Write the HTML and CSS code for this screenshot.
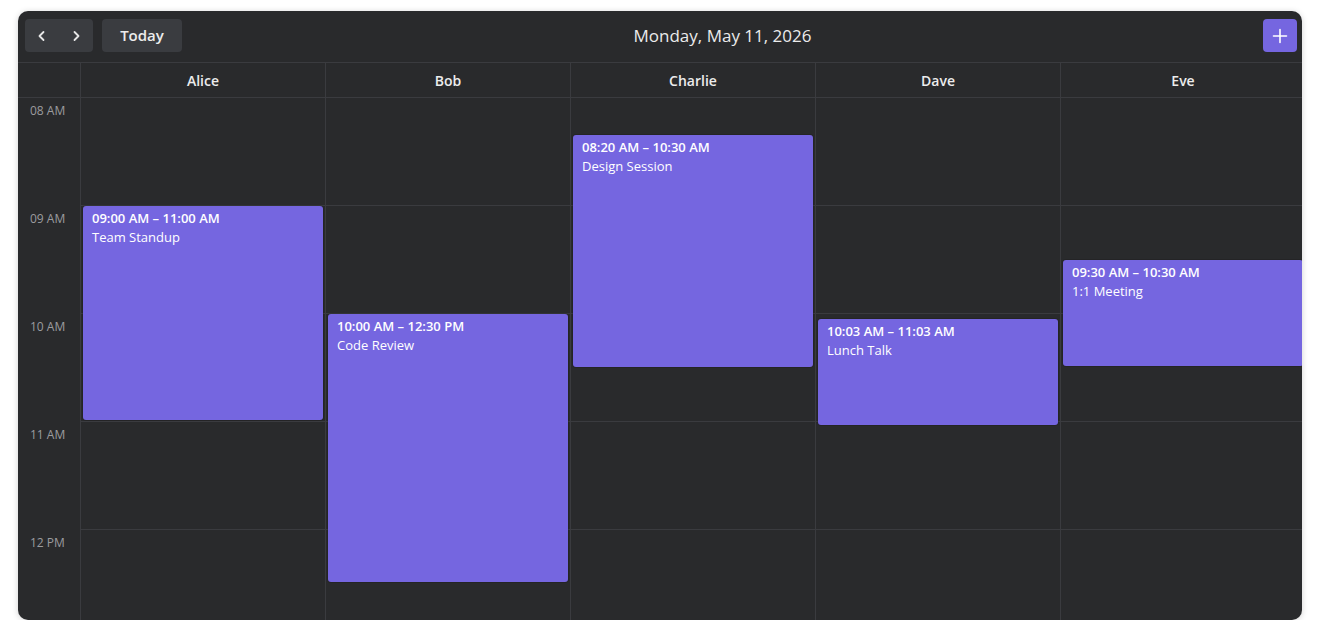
FILE: index.html
```html
<!DOCTYPE html>
<html lang="en">
<head>
    <meta charset="UTF-8">
    <meta name="viewport" content="width=device-width, initial-scale=1.0">
    <title>Calendar - Day View</title>
    <link rel="stylesheet" href="styles.css">
</head>
<body>
    <div class="calendar">
        <!-- Toolbar -->
        <div class="toolbar">
            <div class="nav-group">
                <button class="nav-btn" aria-label="Previous">
                    <svg width="14" height="14" viewBox="0 0 14 14"><path d="M8.5 3 L4.5 7 L8.5 11" fill="none" stroke="#e6e6e6" stroke-width="1.8" stroke-linecap="round" stroke-linejoin="round"/></svg>
                </button>
                <button class="nav-btn" aria-label="Next">
                    <svg width="14" height="14" viewBox="0 0 14 14"><path d="M5.5 3 L9.5 7 L5.5 11" fill="none" stroke="#e6e6e6" stroke-width="1.8" stroke-linecap="round" stroke-linejoin="round"/></svg>
                </button>
            </div>
            <button class="today-btn">Today</button>
            <div class="title">Monday, May 11, 2026</div>
            <button class="add-btn" aria-label="Add event">
                <svg width="18" height="18" viewBox="0 0 18 18"><path d="M9 2.5 V15.5 M2.5 9 H15.5" fill="none" stroke="#ffffff" stroke-width="1.6" stroke-linecap="round"/></svg>
            </button>
        </div>

        <!-- Grid -->
        <div class="grid-wrap">
            <div class="grid">
                <div class="head-cell gutter-head"></div>
                <div class="head-cell">Alice</div>
                <div class="head-cell">Bob</div>
                <div class="head-cell">Charlie</div>
                <div class="head-cell">Dave</div>
                <div class="head-cell">Eve</div>

                <div class="gutter">
                    <div class="time-label">08 AM</div>
                    <div class="time-label">09 AM</div>
                    <div class="time-label">10 AM</div>
                    <div class="time-label">11 AM</div>
                    <div class="time-label">12 PM</div>
                </div>

                <div class="day-col">
                    <div class="slot"></div><div class="slot"></div><div class="slot"></div><div class="slot"></div><div class="slot"></div>
                    <div class="event" style="top: 108px; height: 214px;">
                        <div class="event-time">09:00 AM – 11:00 AM</div>
                        <div class="event-title">Team Standup</div>
                    </div>
                </div>

                <div class="day-col">
                    <div class="slot"></div><div class="slot"></div><div class="slot"></div><div class="slot"></div><div class="slot"></div>
                    <div class="event" style="top: 216px; height: 268px;">
                        <div class="event-time">10:00 AM – 12:30 PM</div>
                        <div class="event-title">Code Review</div>
                    </div>
                </div>

                <div class="day-col">
                    <div class="slot"></div><div class="slot"></div><div class="slot"></div><div class="slot"></div><div class="slot"></div>
                    <div class="event" style="top: 37px; height: 232px;">
                        <div class="event-time">08:20 AM – 10:30 AM</div>
                        <div class="event-title">Design Session</div>
                    </div>
                </div>

                <div class="day-col">
                    <div class="slot"></div><div class="slot"></div><div class="slot"></div><div class="slot"></div><div class="slot"></div>
                    <div class="event" style="top: 221px; height: 106px;">
                        <div class="event-time">10:03 AM – 11:03 AM</div>
                        <div class="event-title">Lunch Talk</div>
                    </div>
                </div>

                <div class="day-col">
                    <div class="slot"></div><div class="slot"></div><div class="slot"></div><div class="slot"></div><div class="slot"></div>
                    <div class="event" style="top: 162px; height: 106px;">
                        <div class="event-time">09:30 AM – 10:30 AM</div>
                        <div class="event-title">1:1 Meeting</div>
                    </div>
                </div>
            </div>
        </div>
    </div>
</body>
</html>
```

FILE: styles.css
```css
* {
    box-sizing: border-box;
}
body {
    margin: 0;
    padding: 11px 18px 0 18px;
    background: #ffffff;
    font-family: "Open Sans", "Noto Sans", sans-serif;
    color: #e8e8e8;
}
.calendar {
    width: 1284px;
    height: 609px;
    background: #292a2c;
    border-radius: 10px;
    box-shadow: 0 1px 6px rgba(0, 0, 0, 0.18);
    overflow: hidden;
    display: flex;
    flex-direction: column;
}

/* toolbar */
.toolbar {
    height: 52px;
    flex-shrink: 0;
    display: flex;
    align-items: center;
    padding: 0 5px 2px 7px;
    border-bottom: 1px solid #3a3b3f;
}
button {
    font-family: inherit;
    border: none;
    cursor: pointer;
    color: #ececec;
}
.nav-group {
    display: flex;
    height: 33px;
    width: 68px;
    background: #3a3c40;
    border-radius: 4px;
}
.nav-btn {
    flex: 1;
    background: transparent;
    display: flex;
    align-items: center;
    justify-content: center;
    padding: 0;
}
.today-btn {
    margin-left: 9px;
    width: 80px;
    height: 33px;
    background: #3a3c40;
    border-radius: 4px;
    font-size: 15px;
    font-weight: 600;
    padding: 0 0 2px 0;
}
.title {
    flex: 1;
    text-align: center;
    font-size: 17px;
    color: #ebebeb;
}
.add-btn {
    width: 34px;
    height: 33px;
    background: #7566e0;
    border-radius: 4px;
    display: flex;
    align-items: center;
    justify-content: center;
    padding: 0;
}

/* grid */
.grid-wrap {
    flex: 1;
    overflow: hidden;
}
.grid {
    display: grid;
    grid-template-columns: 62px repeat(5, 245px);
    width: 1287px;
}
.head-cell {
    height: 35px;
    display: flex;
    align-items: center;
    justify-content: center;
    font-size: 14px;
    font-weight: 600;
    color: #ececec;
    border-left: 1px solid #3a3b3f;
    border-bottom: 1px solid #3a3b3f;
}
.gutter-head {
    border-left: none;
}
.time-label {
    height: 108px;
    padding: 6px 0 0 12px;
    font-size: 12px;
    line-height: 14px;
    color: #9b9c9f;
}
.day-col {
    position: relative;
    border-left: 1px solid #3a3b3f;
}
.slot {
    height: 108px;
    border-bottom: 1px solid #3a3b3f;
}
.event {
    position: absolute;
    left: 2px;
    right: 2px;
    background: #7566e0;
    border-radius: 3px;
    padding: 3px 9px;
    color: #ffffff;
    font-size: 13px;
    line-height: 19px;
    box-shadow: 0 0 0 1px rgba(0, 0, 0, 0.12);
}
.event-time {
    font-weight: 600;
}
```
